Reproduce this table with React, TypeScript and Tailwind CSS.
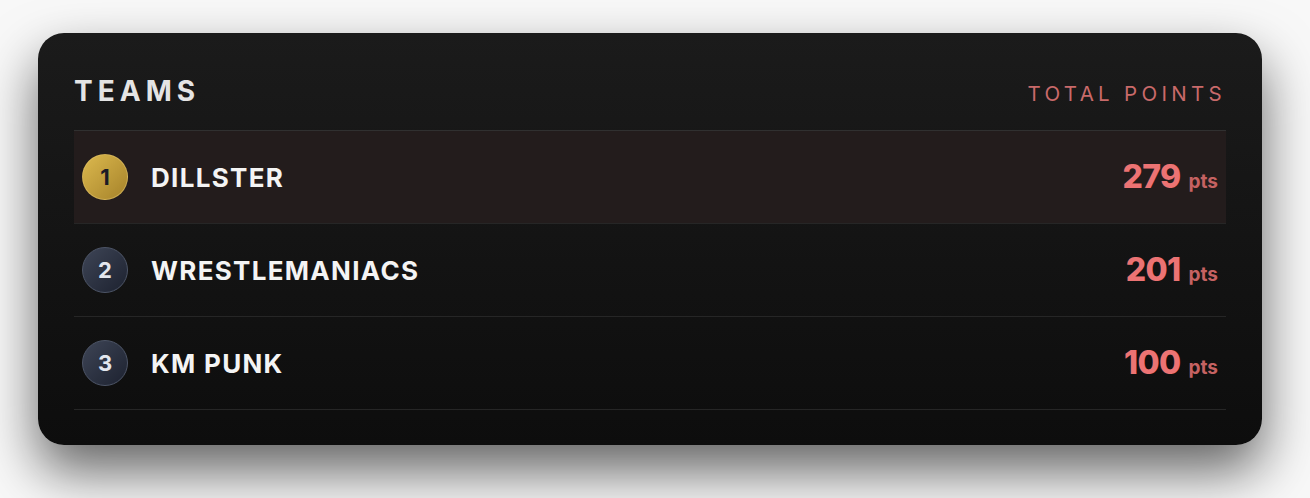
const teams = [
  { rank: 1, name: "DILLSTER", points: 279 },
  { rank: 2, name: "WRESTLEMANIACS", points: 201 },
  { rank: 3, name: "KM PUNK", points: 100 },
];

function RankBadge({ rank }: { rank: number }) {
  if (rank === 1) {
    return (
      <div className="flex h-[46px] w-[46px] shrink-0 items-center justify-center rounded-full border border-[#e0c065]/60 bg-linear-to-br from-[#dcb94e] to-[#a6832a] text-[22px] font-bold text-[#1b1b26]">
        {rank}
      </div>
    );
  }
  return (
    <div className="flex h-[46px] w-[46px] shrink-0 items-center justify-center rounded-full border border-[#4d5567] bg-linear-to-br from-[#3e4556] to-[#1d2230] text-[22px] font-bold text-[#e2e6ee]">
      {rank}
    </div>
  );
}

export default function App() {
  return (
    <div className="min-h-[498px] bg-[#f8f8f8] pl-[38px] pt-[33px] font-['Inter',sans-serif]">
      <div className="w-[1224px] rounded-[26px] bg-linear-to-b from-[#1b1b1b] to-[#0d0d0d] px-9 pb-[35px] pt-[41px] shadow-[0_26px_54px_rgba(0,0,0,0.6)]">
        {/* header */}
        <div className="flex items-start justify-between pb-[22px]">
          <h2 className="text-[28px] font-bold leading-[34px] tracking-[0.18em] text-[#e4e4e4]">TEAMS</h2>
          <span className="mt-[7px] text-[20.5px] leading-[26px] tracking-[0.21em] text-[#c96a6a]">TOTAL POINTS</span>
        </div>

        <div className="border-t border-[#303030]">
          {teams.map((t) => (
            <div
              key={t.rank}
              className={`flex h-[93px] items-center border-b border-[#262626] px-2 ${t.rank === 1 ? "bg-[#231c1c]" : ""}`}
            >
              <RankBadge rank={t.rank} />
              <span className="ml-[23px] text-[26px] font-bold tracking-[0.05em] text-[#f4f4f4]">{t.name}</span>
              <div className="ml-auto flex items-baseline">
                <span className="text-[32px] font-extrabold tracking-[-0.02em] text-[#ec7373]">{t.points}</span>
                <span className="ml-[8px] text-[19px] font-bold text-[#c56262]">pts</span>
              </div>
            </div>
          ))}
        </div>
      </div>
    </div>
  );
}
